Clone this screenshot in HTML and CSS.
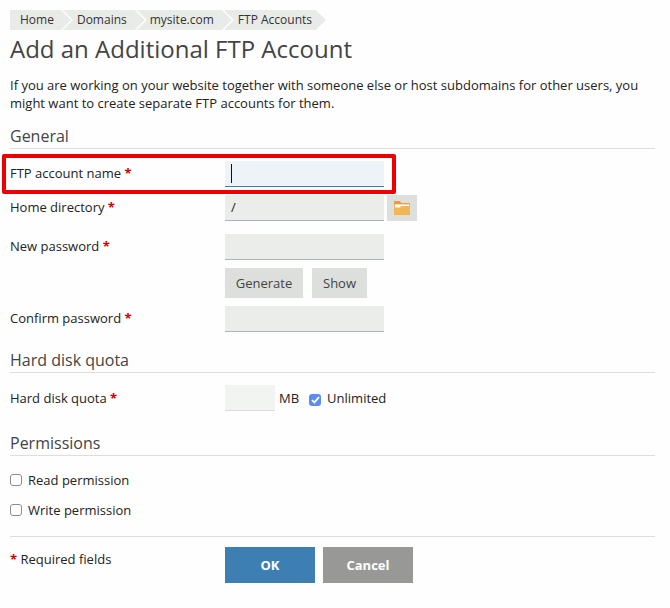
FILE: index.html
```html
<!DOCTYPE html>
<html lang="en">
<head>
  <meta charset="UTF-8">
  <meta name="viewport" content="width=device-width, initial-scale=1.0">
  <title>Add an Additional FTP Account</title>
  <link rel="stylesheet" href="styles.css">
</head>
<body>
  <div class="breadcrumbs">
    <a class="crumb crumb-first">Home</a>
    <a class="crumb">Domains</a>
    <a class="crumb crumb-site">mysite.com</a>
    <a class="crumb crumb-last">FTP Accounts</a>
  </div>
  <h1>Add an Additional FTP Account</h1>
  <p class="intro">If you are working on your website together with someone else or host subdomains for other users, you might want to create separate FTP accounts for them.</p>

  <form>
    <h2 class="section-title">General</h2>
    <div class="row row-name">
      <label class="field-label">FTP account name <span class="req">*</span></label>
      <div class="field"><div class="input input-active"><span class="caret"></span></div></div>
      <div class="highlight"></div>
    </div>
    <div class="row row-home">
      <label class="field-label">Home directory <span class="req">*</span></label>
      <div class="field">
        <div class="input">/</div>
        <button type="button" class="btn btn-folder">
          <svg width="16" height="14" viewBox="0 0 16 14">
            <path d="M0 1.500C0 .7.5 0 1.200 0h4.600l1.400 2H16v12H0z" fill="#f3b655"/>
            <path d="M0 1.500C0 .7.5 0 1.200 0h4.600l1.400 2H16v1H0z" fill="#f0954a"/>
            <path d="M1 3.500h14V5H6.500v1.500H1z" fill="#fff"/>
          </svg>
        </button>
      </div>
    </div>
    <div class="row row-pass">
      <label class="field-label">New password <span class="req">*</span></label>
      <div class="field"><div class="input"></div></div>
    </div>
    <div class="row row-tools">
      <div class="field">
        <button type="button" class="btn btn-generate">Generate</button>
        <button type="button" class="btn btn-show">Show</button>
      </div>
    </div>
    <div class="row row-confirm">
      <label class="field-label">Confirm password <span class="req">*</span></label>
      <div class="field"><div class="input"></div></div>
    </div>

    <h2 class="section-title section-quota">Hard disk quota</h2>
    <div class="row row-quota">
      <label class="field-label">Hard disk quota <span class="req">*</span></label>
      <div class="field">
        <div class="input input-small"></div>
        <span class="unit">MB</span>
        <span class="checkbox checkbox-on">
          <svg width="9" height="8" viewBox="0 0 9 8"><path d="M1 4.200l2.300 2.300L8 1.200" fill="none" stroke="#fff" stroke-width="1.800"/></svg>
        </span>
        <span class="check-text">Unlimited</span>
      </div>
    </div>

    <h2 class="section-title section-perm">Permissions</h2>
    <div class="check-row check-read"><span class="checkbox"></span>Read permission</div>
    <div class="check-row check-write"><span class="checkbox"></span>Write permission</div>

    <div class="form-footer">
      <div class="required"><span class="req">*</span> Required fields</div>
      <div class="footer-buttons">
        <button type="button" class="btn-main btn-ok">OK</button>
        <button type="button" class="btn-main btn-cancel">Cancel</button>
      </div>
    </div>
  </form>
</body>
</html>
```

FILE: styles.css
```css
body {
  margin: 0;
  padding: 10px 15px 0 10px;
  background-color: #fefefe;
  color: #222;
  font-family: "Open Sans", sans-serif;
  font-size: 13px;
  line-height: 18px;
}
.breadcrumbs {
  display: flex;
  height: 20px;
}
.crumb {
  display: block;
  height: 20px;
  line-height: 20px;
  padding: 0 18px 0 14px;
  margin-left: -8px;
  font-size: 12px;
  color: #333;
  background-color: #e9ebe9;
  clip-path: polygon(0 0, calc(100% - 10px) 0, 100% 50%, calc(100% - 10px) 100%, 0 100%, 10px 50%);
}
.crumb-first {
  margin-left: 0;
  padding-left: 10px;
  padding-right: 17px;
  clip-path: polygon(0 0, calc(100% - 10px) 0, 100% 50%, calc(100% - 10px) 100%, 0 100%);
}
.crumb-site {
  padding-left: 13px;
}
.crumb-last {
  padding-right: 14px;
}
h1 {
  margin: 2px 0 0;
  font-size: 24px;
  line-height: 34px;
  font-weight: 400;
  color: #444;
}
.intro {
  margin: 10px 0 0;
}
.section-title {
  margin: 0;
  padding-bottom: 1px;
  font-size: 16px;
  line-height: 22px;
  font-weight: 400;
  color: #444;
  border-bottom: 1px solid #ddd;
}
form {
  margin-top: 13px;
}
.row {
  position: relative;
  display: flex;
  align-items: flex-start;
  padding-left: 215px;
}
.field-label {
  position: absolute;
  left: 0;
  top: 3px;
}
.req {
  color: #c00;
  font-weight: 700;
}
.field {
  display: flex;
  align-items: center;
}
.input {
  box-sizing: border-box;
  width: 159px;
  height: 26px;
  padding-left: 6px;
  line-height: 25px;
  background-color: #ebedea;
  border-bottom: 1px solid #aab4bc;
}
.input-active {
  display: flex;
  align-items: center;
  background-color: #eef3f8;
  border-bottom-color: #3d7eb5;
}
.caret {
  width: 1px;
  height: 19px;
  background-color: #111;
}
.input-small {
  width: 50px;
  background-color: #f2f4f1;
  border-bottom-color: #ddd;
}
.row-name { margin-top: 12px; }
.row-home { margin-top: 8px; }
.row-pass { margin-top: 13px; }
.row-tools { margin-top: 8px; }
.row-confirm { margin-top: 8px; }
.row-quota { margin-top: 12px; }
.row-quota .field-label { top: 4px; }
.highlight {
  position: absolute;
  left: -8px;
  top: -7px;
  width: 386px;
  height: 32px;
  border: 4px solid #ee0000;
  border-radius: 2px;
}
.btn {
  border: 0;
  padding: 0;
  font-family: inherit;
  font-size: 13px;
  color: #444;
  background-color: #dcdfdb;
}
.btn-folder {
  display: flex;
  align-items: center;
  justify-content: center;
  width: 30px;
  height: 26px;
  margin-left: 3px;
}
.btn-generate {
  width: 78px;
  height: 30px;
}
.btn-show {
  width: 55px;
  height: 30px;
  margin-left: 9px;
}
.section-quota { margin-top: 17px; }
.section-perm { margin-top: 21px; }
.unit {
  margin-left: 4px;
}
.checkbox {
  box-sizing: border-box;
  display: inline-flex;
  align-items: center;
  justify-content: center;
  width: 12px;
  height: 12px;
  border: 1px solid #8c8c8c;
  border-radius: 3px;
  background-color: #fff;
}
.checkbox-on {
  margin: 3px 0 0 10px;
  border: 0;
  background-color: #5b8def;
}
.check-text {
  margin-left: 6px;
}
.check-row {
  display: flex;
  align-items: center;
  gap: 6px;
}
.check-read { margin-top: 15px; }
.check-write { margin-top: 12px; }
.form-footer {
  display: flex;
  margin-top: 17px;
  padding-top: 10px;
  border-top: 1px solid #ddd;
}
.required {
  width: 215px;
  padding-top: 3px;
}
.footer-buttons {
  display: flex;
  gap: 8px;
}
.btn-main {
  width: 90px;
  height: 36px;
  border: 0;
  padding: 0;
  font-family: inherit;
  font-size: 13px;
  font-weight: 700;
  color: #fff;
}
.btn-ok { background-color: #3d7eb3; }
.btn-cancel { background-color: #989997; }
```
